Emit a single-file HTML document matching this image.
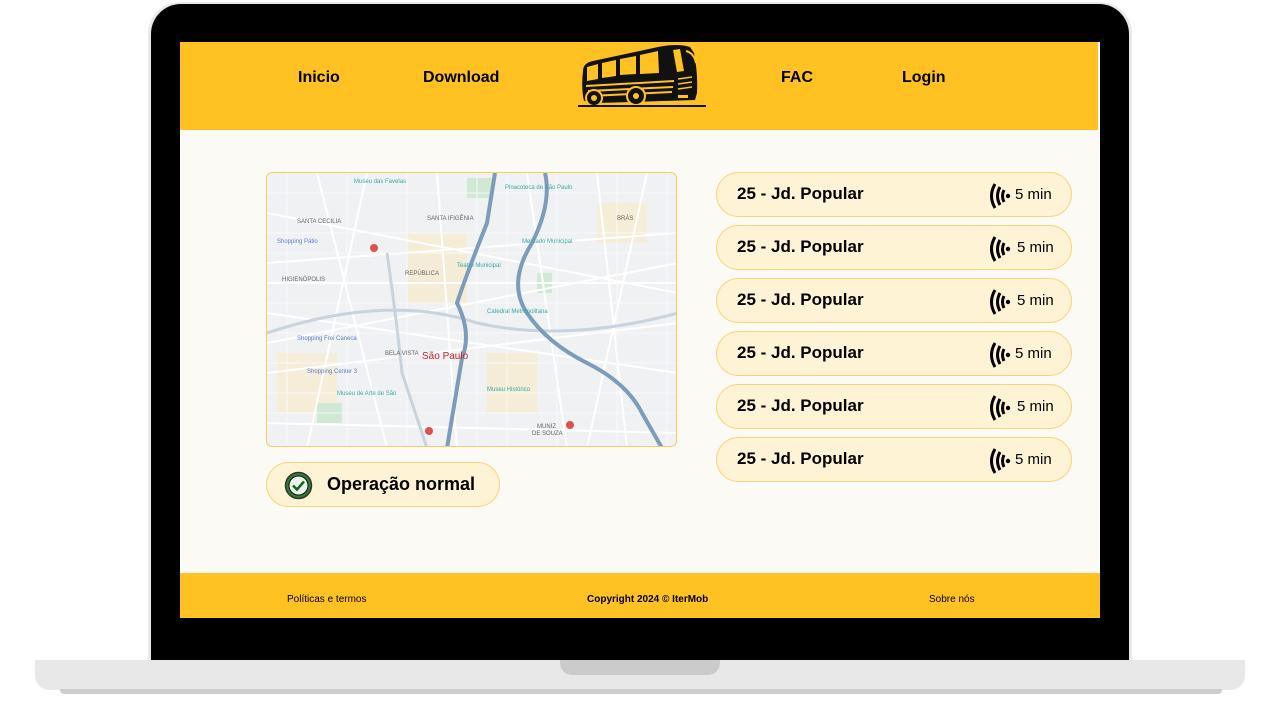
<!DOCTYPE html>
<html><head><meta charset="utf-8"><style>
*{margin:0;padding:0;box-sizing:border-box}
body{width:1280px;height:720px;background:#fff;position:relative;overflow:hidden;font-family:"Liberation Sans",sans-serif}
.bez{position:absolute;left:148px;top:2px;width:984px;height:662px;background:#e9e9e9;border-radius:32px 32px 0 0}
.blk{position:absolute;left:151px;top:4px;width:978px;height:657px;background:#000;border-radius:30px 30px 0 0}
.base{position:absolute;left:35px;top:660px;width:1210px;height:30px;background:#e8e8e8;border-radius:0 0 14px 14px}
.shadow{position:absolute;left:60px;top:689px;width:1162px;height:5px;background:#cdcdcd;border-radius:0 0 4px 4px}
.notch{position:absolute;left:560px;top:660px;width:160px;height:15px;background:#cbcbcb;border-radius:0 0 12px 12px}
.screen{position:absolute;left:180px;top:42px;width:920px;height:576px;background:#fcfaf5}
.hdr{position:absolute;left:0;top:0;width:918px;height:88px;background:#ffc222}
.nav{position:absolute;top:27px;font-weight:bold;font-size:16px;color:#000}
.ftr{position:absolute;left:0;top:531px;width:920px;height:45px;background:#ffc222;font-size:10px;color:#000}
.ftr span{position:absolute;top:21px}
.map{position:absolute;left:86px;top:130px;width:411px;height:275px;border:1px solid #f5cf5e;border-radius:6px;overflow:hidden;background:#eef0f3}
.st{position:absolute;left:86px;top:420px;width:234px;height:45px;border:1px solid #f7d67a;border-radius:23px;background:#fff3d6}
.st .t{position:absolute;left:60px;top:11px;font-size:18px;font-weight:bold}
.row{position:absolute;left:536px;width:356px;height:45px;border:1px solid #f7d67a;border-radius:23px;background:#fff3d6}
.row .n{position:absolute;left:20px;top:11px;font-size:17px;font-weight:bold}
.row svg{position:absolute;left:270px;top:9px}
.row .m{position:absolute;left:298px;top:13px;font-size:15px}
</style></head><body>
<div class="bez"></div><div class="blk"></div>
<div class="base"></div><div class="shadow"></div><div class="notch"></div>
<div class="screen">
<div class="hdr">
<span class="nav" style="left:118px">Inicio</span>
<span class="nav" style="left:243px">Download</span>
<span class="nav" style="left:601px">FAC</span>
<span class="nav" style="left:722px">Login</span>
<svg style="position:absolute;left:398px;top:1px" width="130" height="66" viewBox="0 0 130 66">
<path d="M5 28 Q5 20 15 18 L80 4 Q100 0 112 4 L116 10 Q120 30 119 50 L117 57 L20 60 L6 58 Q3 45 5 28 Z" fill="#111"/>
<path d="M9 24 L20 21 L20 36 L9 38 Z M24 20 L38 17 L38 33 L24 35 Z M42 16 L58 13 L58 31 L42 32 Z M62 12 L80 8 L81 30 L62 31 Z" fill="#ffc222"/>
<path d="M95 7 L102 6 L106 28 L99 29 Z" fill="#ffc222"/>
<path d="M108 8 Q116 10 118 20" stroke="#ffc222" stroke-width="2" fill="none"/>
<path d="M8 43 L96 38 M10 48 L95 44 M12 53 L94 49" stroke="#ffc222" stroke-width="2"/>
<path d="M100 36 L114 34 M100 41 L114 39 M100 46 L114 44" stroke="#ffc222" stroke-width="1.5"/>
<rect x="100" y="52" width="10" height="3" fill="#ffc222"/>
<circle cx="16" cy="55" r="8" fill="#111" stroke="#ffc222" stroke-width="2"/><circle cx="16" cy="55" r="3" fill="#ffc222"/>
<circle cx="58" cy="53" r="9" fill="#111" stroke="#ffc222" stroke-width="2"/><circle cx="58" cy="53" r="3" fill="#ffc222"/>
<path d="M0 63 L128 63" stroke="#111" stroke-width="2"/>
</svg>
</div>
<div class="map">
<svg width="411" height="275" viewBox="0 0 411 275">
<rect width="411" height="275" fill="#f0f1f3"/>
<g fill="#f6ecd0" opacity=".8"><rect x="140" y="60" width="60" height="70"/><rect x="220" y="180" width="50" height="60"/><rect x="10" y="180" width="60" height="60"/><rect x="330" y="30" width="50" height="40"/></g>
<g fill="#cfe9d4"><rect x="200" y="5" width="25" height="20"/><rect x="50" y="230" width="25" height="20"/><rect x="270" y="100" width="15" height="20"/></g>
<g stroke="#fff" stroke-width="2" fill="none">
<path d="M0 40 L411 120 M0 90 L411 60 M0 140 L411 200 M0 200 L411 150 M0 250 L411 260 M50 0 L120 275 M100 0 L40 275 M170 0 L190 275 M260 0 L300 275 M330 0 L360 275 M380 0 L320 275 M0 110 L411 110 M0 170 L411 90"/>
</g>
<g stroke="#fafafa" stroke-width="1" fill="none" opacity=".9">
<path d="M0 20 L411 20 M0 60 L411 60 M0 80 L411 80 M0 130 L411 130 M0 160 L411 160 M0 190 L411 190 M0 220 L411 220 M0 240 L411 240 M20 0 L20 275 M80 0 L80 275 M140 0 L140 275 M210 0 L210 275 M240 0 L240 275 M290 0 L290 275 M350 0 L350 275 M400 0 L400 275"/>
</g>
<g stroke="#c8d3df" stroke-width="3" fill="none">
<path d="M0 160 Q120 120 210 150 Q300 170 411 140 M120 80 Q130 150 135 200 L160 275"/>
</g>
<g stroke="#7d9cb9" stroke-width="4" fill="none">
<path d="M228 0 L220 50 Q200 100 190 130 Q205 160 195 185 L180 275"/>
<path d="M278 0 Q285 30 265 70 Q240 110 260 140 Q280 170 320 190 Q360 210 375 240 L395 275"/>
</g>
<g font-family="Liberation Sans" font-size="6" fill="#666">
<text x="30" y="50">SANTA CECILIA</text><text x="160" y="47">SANTA IFIGÊNIA</text><text x="350" y="47">BRÁS</text>
<text x="15" y="108">HIGIENÓPOLIS</text><text x="138" y="102">REPÚBLICA</text><text x="118" y="182">BELA VISTA</text>
<text x="270" y="255">MUNIZ</text><text x="265" y="262">DE SOUZA</text>
</g>
<g font-family="Liberation Sans" font-size="6" fill="#3aa7a7">
<text x="87" y="10">Museu das Favelas</text><text x="238" y="16">Pinacoteca de São Paulo</text><text x="255" y="70">Mercado Municipal</text>
<text x="190" y="94">Teatro Municipal</text><text x="220" y="140">Catedral Metropolitana</text><text x="70" y="222">Museu de Arte de São</text><text x="220" y="218">Museu Histórico</text>
</g>
<g font-family="Liberation Sans" font-size="6" fill="#5b7fd0"><text x="10" y="70">Shopping Pátio</text><text x="30" y="167">Shopping Frei Caneca</text><text x="40" y="200">Shopping Center 3</text></g>
<text x="155" y="186" font-family="Liberation Sans" font-size="10" fill="#c62828">São Paulo</text>
<g fill="#e05050"><circle cx="107" cy="75" r="4"/><circle cx="162" cy="258" r="4"/><circle cx="303" cy="252" r="4"/></g>
</svg>
</div>
<div class="st">
<svg style="position:absolute;left:17px;top:8px" width="29" height="29" viewBox="0 0 29 29"><circle cx="14.5" cy="14.5" r="13" fill="#2e7d32" stroke="#333" stroke-width="1.5"/><circle cx="14.5" cy="14.5" r="9.5" fill="#e6f4ec" stroke="#111" stroke-width="1"/><path d="M9 14.5 L13 18.5 L20 10.5" stroke="#1b5e20" stroke-width="2.5" fill="none"/></svg>
<span class="t">Operação normal</span>
</div>
<div class="row" style="top:130px"><span class="n">25 - Jd. Popular</span><svg width="26" height="28" viewBox="0 0 26 28"><path d="M8 2 Q1 14 8 26 M13 5 Q8 14 13 23 M17 8 Q14 14 17 20" stroke="#000" stroke-width="3" fill="none"/><circle cx="21" cy="14" r="2.2"/></svg><span class="m">5 min</span></div>
<div class="row" style="top:183px"><span class="n">25 - Jd. Popular</span><svg width="26" height="28" viewBox="0 0 26 28"><path d="M8 2 Q1 14 8 26 M13 5 Q8 14 13 23 M17 8 Q14 14 17 20" stroke="#000" stroke-width="3" fill="none"/><circle cx="21" cy="14" r="2.2"/></svg><span class="m" style="left:300px">5 min</span></div>
<div class="row" style="top:236px"><span class="n">25 - Jd. Popular</span><svg width="26" height="28" viewBox="0 0 26 28"><path d="M8 2 Q1 14 8 26 M13 5 Q8 14 13 23 M17 8 Q14 14 17 20" stroke="#000" stroke-width="3" fill="none"/><circle cx="21" cy="14" r="2.2"/></svg><span class="m" style="left:300px">5 min</span></div>
<div class="row" style="top:289px"><span class="n">25 - Jd. Popular</span><svg width="26" height="28" viewBox="0 0 26 28"><path d="M8 2 Q1 14 8 26 M13 5 Q8 14 13 23 M17 8 Q14 14 17 20" stroke="#000" stroke-width="3" fill="none"/><circle cx="21" cy="14" r="2.2"/></svg><span class="m">5 min</span></div>
<div class="row" style="top:342px"><span class="n">25 - Jd. Popular</span><svg width="26" height="28" viewBox="0 0 26 28"><path d="M8 2 Q1 14 8 26 M13 5 Q8 14 13 23 M17 8 Q14 14 17 20" stroke="#000" stroke-width="3" fill="none"/><circle cx="21" cy="14" r="2.2"/></svg><span class="m" style="left:300px">5 min</span></div>
<div class="row" style="top:395px"><span class="n">25 - Jd. Popular</span><svg width="26" height="28" viewBox="0 0 26 28"><path d="M8 2 Q1 14 8 26 M13 5 Q8 14 13 23 M17 8 Q14 14 17 20" stroke="#000" stroke-width="3" fill="none"/><circle cx="21" cy="14" r="2.2"/></svg><span class="m">5 min</span></div>
<div class="ftr">
<span style="left:107px">Políticas e termos</span>
<span style="left:407px;font-weight:bold">Copyright 2024 © IterMob</span>
<span style="left:749px">Sobre nós</span>
</div>
</div>
</body></html>
